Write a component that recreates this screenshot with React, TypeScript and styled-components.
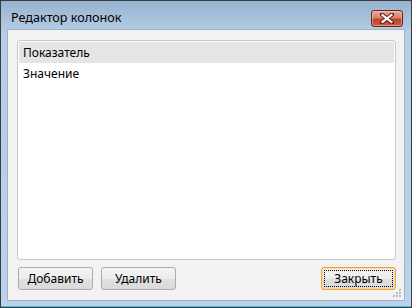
import React from "react";
import styled, { createGlobalStyle } from "styled-components";

const Global = createGlobalStyle`
  html, body { margin: 0; padding: 0; background: #ffffff; }
  #root { width: 412px; height: 308px; }
  * { box-sizing: border-box; }
`;

const Frame = styled.div`
  width: 412px;
  height: 308px;
  border: 1px solid #3c3c3c;
  background: linear-gradient(to bottom, #97b3cf 0px, #b5cde6 30px, #bad2eb 100%);
  box-shadow: inset 0 -1px 0 #49c0dc;
  display: flex;
  flex-direction: column;
  padding: 0 6px 6px 6px;
  font-family: "Noto Sans", "Open Sans", sans-serif;
  font-size: 12px;
  color: #000;
  position: relative;
`;

const TitleBar = styled.div`
  height: 28px;
  display: flex;
  align-items: flex-start;
  justify-content: space-between;
  flex: none;
`;

const Title = styled.div`
  padding: 8px 0 0 4px;
  font-size: 12.6px;
  color: #000;
`;

const CloseButton = styled.div`
  width: 32px;
  height: 17px;
  margin: 9px 2px 0 0;
  border: 1px solid #6b2219;
  border-radius: 3px;
  background: linear-gradient(to bottom, #e7a89a 0%, #d8826f 45%, #c2412c 55%, #cf5a3f 100%);
  box-shadow: inset 0 0 0 1px rgba(255, 220, 210, 0.45);
  display: flex;
  align-items: center;
  justify-content: center;
`;

const Client = styled.div`
  flex: 1;
  border: 1px solid #a4b3c4;
  background: #f2f2f2;
  display: flex;
  flex-direction: column;
  padding: 10px 8px 10px 9px;
  gap: 7px;
  position: relative;
`;

const ListBox = styled.div`
  flex: 1;
  background: #ffffff;
  border: 1px solid #c9c9c9;
  border-radius: 3px;
  padding: 1px;
  display: flex;
  flex-direction: column;
`;

const Row = styled.div<{ $selected?: boolean }>`
  height: 21px;
  display: flex;
  align-items: center;
  padding-left: 4px;
  background: ${(p) => (p.$selected ? "#e5e5e5" : "transparent")};
  font-size: 12px;
`;

const ButtonBar = styled.div`
  display: flex;
  gap: 8px;
  height: 23px;
  flex: none;
  padding-left: 1px;
`;

const Spacer = styled.div`
  flex: 1;
`;

const Button = styled.div<{ $focused?: boolean }>`
  width: 75px;
  height: 23px;
  border: 1px solid ${(p) => (p.$focused ? "#f0a43c" : "#acacac")};
  border-radius: 3px;
  background: linear-gradient(to bottom, #f4f4f4 0%, #ececec 50%, #e0e0e0 51%, #dadada 100%);
  display: flex;
  align-items: center;
  justify-content: center;
  font-size: 12px;
  position: relative;
  ${(p) => (p.$focused ? "box-shadow: inset 0 0 0 1px #fbd59a;" : "")}
`;

const FocusRect = styled.div`
  position: absolute;
  inset: 2px;
  border: 1px dotted #000;
`;

const Grip = styled.svg`
  position: absolute;
  right: 2px;
  bottom: 2px;
`;

export default function App() {
  return (
    <>
      <Global />
      <Frame>
        <TitleBar>
          <Title>Редактор колонок</Title>
          <CloseButton>
            <svg width="14" height="11" viewBox="0 0 14 11">
              <path d="M2 1.5 L12 9.5 M12 1.5 L2 9.5" stroke="#5a1a12" strokeWidth="4" strokeLinecap="square" />
              <path d="M2.5 2 L11.5 9 M11.5 2 L2.5 9" stroke="#ffffff" strokeWidth="2.2" strokeLinecap="square" />
            </svg>
          </CloseButton>
        </TitleBar>
        <Client>
          <ListBox>
            <Row $selected>Показатель</Row>
            <Row>Значение</Row>
          </ListBox>
          <ButtonBar>
            <Button>Добавить</Button>
            <Button>Удалить</Button>
            <Spacer />
            <Button $focused>
              Закрыть
              <FocusRect />
            </Button>
          </ButtonBar>
          <Grip width="10" height="10" viewBox="0 0 10 10">
            {[
              [8, 2],
              [5, 5],
              [8, 5],
              [2, 8],
              [5, 8],
              [8, 8],
            ].map(([x, y]) => (
              <rect key={`${x}-${y}`} x={x - 1} y={y - 1} width="2" height="2" fill="#bcbcbc" />
            ))}
          </Grip>
        </Client>
      </Frame>
    </>
  );
}
